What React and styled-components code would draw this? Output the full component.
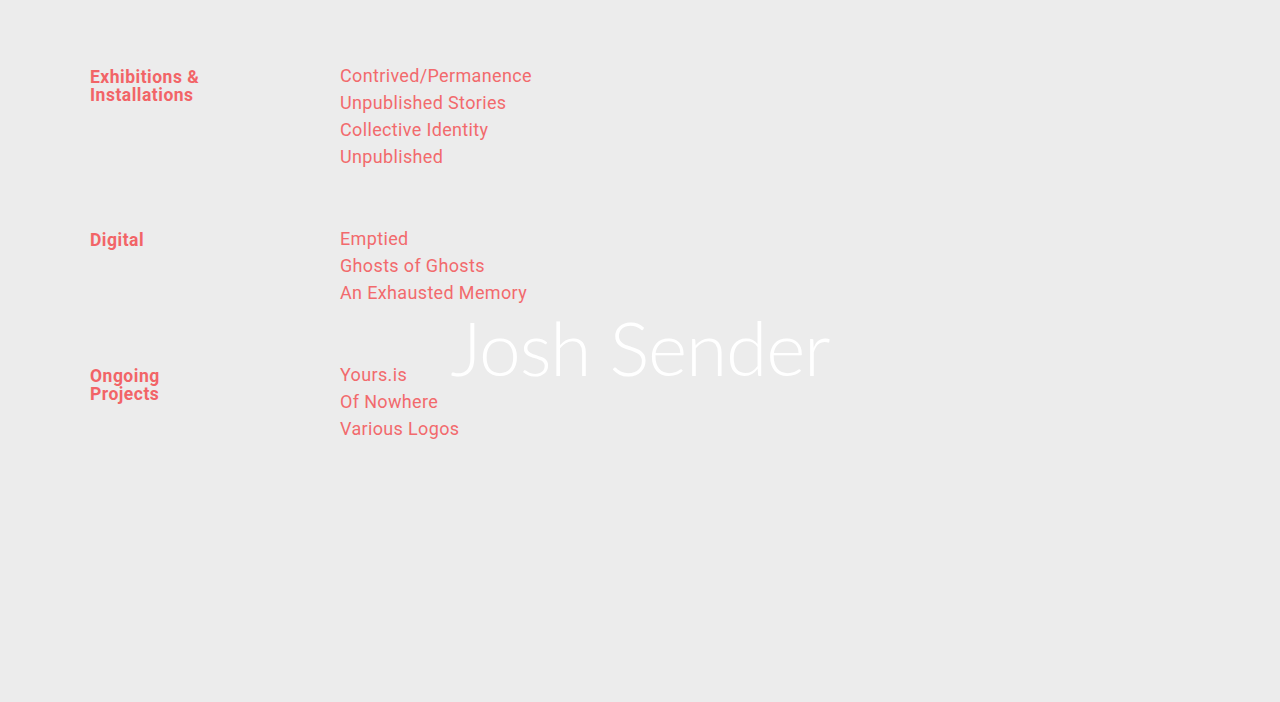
import React from "react";
import styled, { createGlobalStyle } from "styled-components";

const GlobalStyle = createGlobalStyle`
  html, body {
    margin: 0;
    padding: 0;
    background: #ececec;
  }
  body {
    font-family: Roboto, "Liberation Sans", sans-serif;
  }
`;

const Page = styled.div`
  position: relative;
  width: 100%;
  height: 702px;
  background: #ececec;
  overflow: hidden;
`;

const Index = styled.div`
  display: flex;
  flex-direction: column;
  gap: 55px;
  padding: 62px 0 0 90px;
`;

const Section = styled.section`
  display: grid;
  grid-template-columns: 250px 1fr;
`;

const Heading = styled.h2`
  margin: 6px 0 0;
  width: 130px;
  font-size: 17.5px;
  line-height: 18px;
  font-weight: 700;
  letter-spacing: 0.5px;
  color: #f26467;
`;

const List = styled.ul`
  list-style: none;
  margin: 0;
  padding: 0;
`;

const Item = styled.li`
  font-size: 18px;
  line-height: 27px;
  font-weight: 400;
  color: #f26a6c;
  letter-spacing: 0.35px;
`;

const Name = styled.h1`
  position: absolute;
  top: 50%;
  left: 50%;
  transform: translate(-50%, -54%);
  margin: 0;
  font-family: Lato, "Open Sans", sans-serif;
  font-weight: 300;
  font-size: 75px;
  letter-spacing: -1.2px;
  color: #ffffff;
  white-space: nowrap;
`;

const sections = [
  {
    title: "Exhibitions & Installations",
    items: [
      "Contrived/Permanence",
      "Unpublished Stories",
      "Collective Identity",
      "Unpublished",
    ],
  },
  {
    title: "Digital",
    items: ["Emptied", "Ghosts of Ghosts", "An Exhausted Memory"],
  },
  {
    title: "Ongoing Projects",
    items: ["Yours.is", "Of Nowhere", "Various Logos"],
  },
];

const App = () => {
  return (
    <Page>
      <GlobalStyle />
      <Index>
        {sections.map((section) => (
          <Section key={section.title}>
            <Heading>{section.title}</Heading>
            <List>
              {section.items.map((item) => (
                <Item key={item}>{item}</Item>
              ))}
            </List>
          </Section>
        ))}
      </Index>
      <Name>Josh Sender</Name>
    </Page>
  );
};

export default App;
